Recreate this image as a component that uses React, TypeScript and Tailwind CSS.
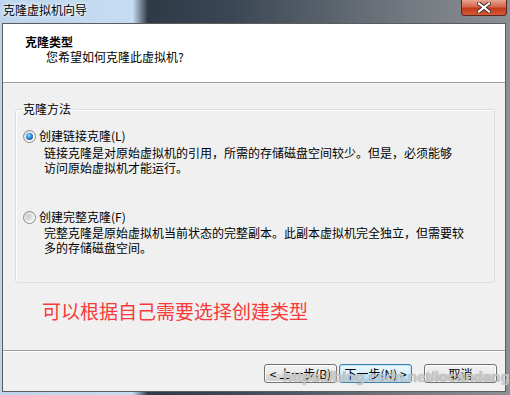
import React from "react";

function Radio({ checked }: { checked?: boolean }) {
  return (
    <span className="w-[13px] h-[13px] shrink-0 rounded-full border border-[#8a8b8c] bg-[linear-gradient(135deg,#d4d4d4_0%,#f4f4f4_60%,#ffffff_100%)] flex items-center justify-center">
      {checked ? (
        <span className="w-[7px] h-[7px] rounded-full bg-[radial-gradient(circle_at_40%_35%,#9ad8ff_0%,#2b8ad6_45%,#0d3b74_100%)]" />
      ) : (
        <span className="w-[7px] h-[7px] rounded-full bg-[linear-gradient(135deg,#c8c8c8,#ececec)]" />
      )}
    </span>
  );
}

function WinButton({ label, focused }: { label: string; focused?: boolean }) {
  return (
    <button
      className={
        focused
          ? "w-[73px] h-[19px] rounded-[3px] border border-[#3c7fb1] bg-[linear-gradient(#eaf6fd_0%,#d9f0fc_50%,#bee6fd_51%,#a7d9f5_100%)] shadow-[inset_0_0_0_1px_#c4e5f6] text-[12px] leading-[17px] text-black"
          : "w-[73px] h-[19px] rounded-[3px] border border-[#707070] bg-[linear-gradient(#f2f2f2_0%,#ebebeb_50%,#dddddd_51%,#cfcfcf_100%)] shadow-[inset_0_0_0_1px_#fcfcfc] text-[12px] leading-[17px] text-black"
      }
    >
      {label}
    </button>
  );
}

export default function App() {
  return (
    <div className="relative w-[510px] h-[395px] flex flex-col overflow-hidden font-['Noto_Sans_CJK_SC',sans-serif] text-[12px] text-black bg-[linear-gradient(to_right,#bcd4ec_0%,#c6dcf2_26%,#2e3a46_29%,#3a4653_45%,#737980_80%,#8c9095_100%)]">
      {/* title bar */}
      <div className="h-[23px] shrink-0 flex items-start justify-between">
        <span className="pl-[3px] pt-[2px] leading-[16px] [text-shadow:0_0_6px_#fff,0_0_3px_#fff]">克隆虚拟机向导</span>
        <div className="mr-[3px] w-[46px] h-[16px] rounded-b-[4px] border border-t-0 border-[#5a2a22] bg-[linear-gradient(#e8a58f_0%,#d4674c_45%,#c2391c_55%,#d65a35_100%)] flex items-center justify-center">
          <svg width="14" height="11" viewBox="0 0 14 11">
            <path d="M2 1.5 L12 9.5 M12 1.5 L2 9.5" stroke="#3a2a2a" strokeWidth="4" strokeLinecap="square" />
            <path d="M2 1.5 L12 9.5 M12 1.5 L2 9.5" stroke="#ffffff" strokeWidth="2.2" strokeLinecap="square" />
          </svg>
        </div>
      </div>

      {/* client */}
      <div className="flex-1 flex pl-[2px] pr-[4px] pb-[3px]">
        <div className="flex-1 flex flex-col border border-[#5c5c5c] bg-[#f0f0f0]">
          <div className="h-[59px] shrink-0 bg-white border-b border-[#a0a0a0] pt-[11px]">
            <div className="pl-[22px] leading-[14px] font-bold">克隆类型</div>
            <div className="pl-[43px] leading-[15px]">您希望如何克隆此虚拟机?</div>
          </div>

          <fieldset className="mt-[18px] ml-[12px] mr-[10px] border border-[#d5dfe5] rounded-[3px] shadow-[inset_1px_1px_0_#fff]">
            <legend className="ml-[5px] px-[2px] leading-[16px]">克隆方法</legend>
            <div className="pt-[11px] pb-[27px]">
              <div className="flex items-center gap-[3px] pl-[7px] h-[16px]">
                <Radio checked />
                <span className="leading-[16px]">创建链接克隆(L)</span>
              </div>
              <div className="pl-[28px] mt-[1px] leading-[15px]">
                <div>链接克隆是对原始虚拟机的引用，所需的存储磁盘空间较少。但是，必须能够</div>
                <div>访问原始虚拟机才能运行。</div>
              </div>

              <div className="flex items-center gap-[3px] pl-[7px] h-[16px] mt-[34px]">
                <Radio />
                <span className="leading-[16px]">创建完整克隆(F)</span>
              </div>
              <div className="pl-[28px] leading-[15px]">
                <div>完整克隆是原始虚拟机当前状态的完整副本。此副本虚拟机完全独立，但需要较</div>
                <div>多的存储磁盘空间。</div>
              </div>
            </div>
          </fieldset>

          <div className="mt-[16px] ml-[39px] text-[19px] leading-[24px] text-[#f83a3a]">可以根据自己需要选择创建类型</div>

          <div className="flex-1" />

          <div className="shrink-0 border-t border-[#a0a0a0]">
            <div className="border-t border-white flex justify-end pr-[8px] pt-[12px] pb-[8px]">
              <WinButton label="< 上一步(B)" />
              <div className="ml-[2px]">
                <WinButton label="下一步(N) >" focused />
              </div>
              <div className="ml-[12px]">
                <WinButton label="取消" />
              </div>
            </div>
          </div>
        </div>
      </div>

      {/* watermark */}
      <span className="absolute left-[283px] top-[368px] text-[15px] leading-[18px] font-['Liberation_Sans',sans-serif] font-bold text-[#d8d8d8]/70 [text-shadow:0_0_1px_#9a9a9a] pointer-events-none">
        https://blog.csdn.net/locandang
      </span>
    </div>
  );
}
